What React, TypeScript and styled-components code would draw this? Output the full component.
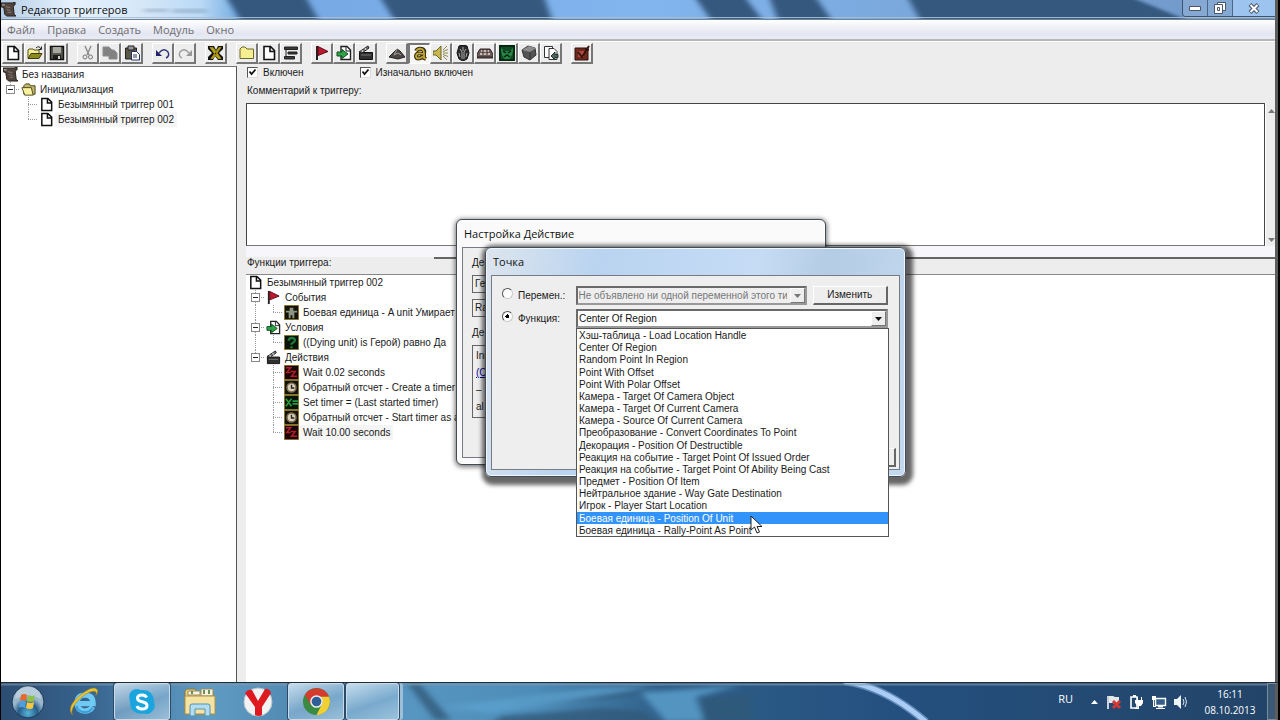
import React from 'react';
import styled, { createGlobalStyle, css } from 'styled-components';

const GlobalStyle = createGlobalStyle`
  * { box-sizing: border-box; }
  html, body { margin: 0; padding: 0; }
  body {
    background: #fff;
    color: #1a1a1a;
    font: 10px/12px "Liberation Sans", Arial, sans-serif;
    overflow: hidden;
  }
  button, select, input, textarea { font: inherit; color: inherit; }
`;

const UI_FONT = '"Open Sans", "Noto Sans", sans-serif';

/* ---------- Shell ---------- */

const Screen = styled.div`
  position: relative;
  display: flex;
  flex-direction: column;
  height: 100vh;
  border-left: 1px solid #000;
  border-right: 2px solid #000;
`;

const Desktop = styled.div`
  flex: 1;
  min-height: 0;
  display: flex;
  flex-direction: column;
  border-right: 3px solid #5c5c5c;
  background: #ededed;
`;

const TitleBar = styled.header`
  position: relative;
  display: flex;
  align-items: center;
  height: 20px;
  background: #7fb0e8;
  border-bottom: 1px solid #6f8296;
  overflow: hidden;
`;

const Wallpaper = styled.svg`
  position: absolute;
  inset: 0;
  width: 100%;
  height: 100%;
`;

const AppTitle = styled.h1`
  position: relative;
  display: flex;
  align-items: center;
  gap: 5px;
  margin: 0;
  flex: 1;
  font: 11px/20px ${UI_FONT};
  color: #111;
`;

const WindowButtons = styled.div`
  position: relative;
  align-self: flex-start;
  display: flex;
  border: 1px solid #3d536e;
  border-top: 0;
  border-right: 0;
  border-radius: 0 0 0 4px;
  overflow: hidden;
`;

const WindowButton = styled.button<{ $wide?: boolean }>`
  display: flex;
  align-items: center;
  justify-content: center;
  width: ${p => (p.$wide ? 42 : 25)}px;
  height: 16px;
  padding: 0;
  border: 0;
  border-right: ${p => (p.$wide ? '0' : '1px solid #4a6688')};
  background: ${p => (p.$wide ? '#9cc4ef' : '#86a9d3')};
`;

const MenuBar = styled.nav`
  display: flex;
  gap: 12px;
  height: 21px;
  padding-left: 6px;
  background: linear-gradient(#fff, #e4e6f2 70%, #e8eaf4);
  border-bottom: 2px solid #b4b8bb;
`;

const MenuItem = styled.button`
  padding: 0;
  border: 0;
  background: none;
  font: 11px/18px ${UI_FONT};
  color: #6d6d6d;
`;

const Toolbar = styled.div`
  display: flex;
  gap: 9px;
  height: 25px;
  padding: 1px 0 0 1px;
  border-top: 1px solid #fff;
`;

const ToolGroup = styled.div`
  display: flex;
`;

const ToolButton = styled.button<{ $pressed?: boolean }>`
  display: flex;
  align-items: center;
  justify-content: center;
  width: 22px;
  height: 21px;
  padding: 0;
  border: 1px solid;
  border-color: #fff #777 #777 #fff;
  border-right-width: 2px;
  border-bottom-width: 2px;
  background: #ededed;
  ${p => p.$pressed && css`
    border-color: #777 #fff #fff #777;
    border-width: 2px 1px 1px 2px;
    background: #f6f6f6;
  `}
`;

/* ---------- Work area ---------- */

const Workspace = styled.main`
  flex: 1;
  min-height: 0;
  display: flex;
`;

const TreePane = styled.aside`
  width: 236px;
  background: #fff;
  border-top: 1px solid #777;
  border-right: 1px solid #555;
`;

const Editor = styled.section`
  flex: 1;
  min-width: 0;
  display: flex;
  flex-direction: column;
  padding-left: 9px;
`;

const CheckRow = styled.div`
  display: flex;
  gap: 56px;
  padding: 1px 0 0 1px;
  height: 18px;
`;

const CheckLabel = styled.label`
  display: flex;
  align-items: flex-start;
  gap: 5px;
`;

const Check = styled.span`
  position: relative;
  width: 11px;
  height: 11px;
  border: 1px solid;
  border-color: #555 #ddd #ddd #555;
  background: #fff;

  input { position: absolute; inset: 0; margin: 0; opacity: 0; }
  svg { display: block; }
`;

const FieldLabel = styled.label`
  height: 19px;
  padding: 1px 0 0 1px;
`;

const CommentRow = styled.div`
  display: flex;
  height: 143px;
`;

const Comment = styled.textarea`
  flex: 1;
  border: 1px solid;
  border-color: #444 #444 #777 #444;
  background: #fff;
  resize: none;
  outline: 0;
`;

const ScrollTrack = styled.div`
  display: flex;
  flex-direction: column;
  justify-content: space-between;
  align-items: flex-end;
  width: 10px;
  padding: 6px 0 4px;
  border-left: 1px solid #fff;
`;

const Splitter = styled.div`
  height: 11px;
  background: #f7f7fb;
`;

const FunctionsTitle = styled.h2`
  display: flex;
  height: 18px;
  margin: 0;
  font: inherit;
  border-bottom: 1px solid #888;

  &::after {
    content: '';
    flex: 1;
    border-top: 2px solid #666;
  }
  span { width: 188px; padding-left: 1px; }
`;

const FunctionsPane = styled.div`
  flex: 1;
  background: #fff;
`;

/* ---------- Tree ---------- */

const Tree = styled.ul`
  list-style: none;
  margin: 0;
  padding: 0;
`;

const TreeRow = styled.li`
  display: flex;
  height: 15px;
  line-height: 15px;
  white-space: nowrap;
`;

const vDots = 'repeating-linear-gradient(#999 0 1px, transparent 1px 2px)';
const hDots = 'repeating-linear-gradient(90deg, #999 0 1px, transparent 1px 2px)';

type GuideKind = 'blank' | 'line' | 'tee' | 'elbow';

const Guide = styled.span<{ $kind: GuideKind }>`
  display: flex;
  align-items: center;
  justify-content: center;
  width: 18px;
  height: 15px;
  background-repeat: no-repeat;
  ${p => p.$kind === 'line' && css`
    background-image: ${vDots};
    background-size: 1px 15px;
    background-position: 9px 0;
  `}
  ${p => p.$kind === 'tee' && css`
    background-image: ${vDots}, ${hDots};
    background-size: 1px 15px, 9px 1px;
    background-position: 9px 0, 9px 7px;
  `}
  ${p => p.$kind === 'elbow' && css`
    background-image: ${vDots}, ${hDots};
    background-size: 1px 8px, 9px 1px;
    background-position: 9px 0, 9px 7px;
  `}
`;

const Toggle = styled.button`
  display: flex;
  align-items: center;
  justify-content: center;
  width: 9px;
  height: 9px;
  padding: 0;
  border: 1px solid #888;
  background: #fff;

  &::before { content: ''; width: 5px; height: 1px; background: #222; }
`;

const IconCell = styled.span`
  display: flex;
  align-items: center;
  justify-content: center;
  width: 18px;
`;

const NodeText = styled.span<{ $selected?: boolean }>`
  padding: 0 3px;
  background: ${p => (p.$selected ? '#f5f5f5' : 'transparent')};
`;

/* ---------- Dialogs ---------- */

const Dialog = styled.section<{ $front?: boolean }>`
  position: absolute;
  display: flex;
  flex-direction: column;
  border: 1px solid #444b55;
  border-radius: 6px;
  ${p => p.$front ? css`
    left: 484px;
    top: 247px;
    width: 421px;
    height: 230px;
    padding: 0 5px 6px;
    background: linear-gradient(100deg, #dde5ee 0, #b9d3f0 25%, #c6dcf5 60%, #b4cce4 75%, #c3daf0 100%);
    box-shadow: inset 0 0 0 1px #eef6ff, 2px 3px 4px 5px rgba(0, 0, 0, .6);
  ` : css`
    left: 455px;
    top: 219px;
    width: 370px;
    height: 246px;
    padding: 0 5px 6px;
    background: #fafafa;
    box-shadow: inset 0 0 0 1px #fff, 0 1px 5px 1px rgba(0, 0, 0, .55);
  `}
`;

const DialogTitle = styled.h2`
  height: 27px;
  margin: 0;
  padding-left: 2px;
  font: 11px/27px ${UI_FONT};
  color: #111;
`;

const DialogBody = styled.form`
  flex: 1;
  display: flex;
  flex-direction: column;
  border: 1px solid #777c84;
  background: #eeeeee;
`;

const BackBody = styled(DialogBody)`
  padding: 5px 9px 39px;
  gap: 6px;
`;

const BackLabel = styled.div`
  height: 16px;
  padding-top: 4px;
`;

const BackField = styled.div`
  height: 18px;
  padding: 2px;
  border: 1px solid #666;
  border-right-color: #fff;
`;

const BackPanel = styled(BackField)`
  flex: 1;
  display: flex;
  flex-direction: column;
  justify-content: space-between;
  padding: 4px 3px;

  a { color: #00009a; }
`;

const FrontBody = styled(DialogBody)`
  padding: 10px 3px 2px 10px;
  gap: 4px;
`;

const OptionRow = styled.div`
  display: flex;
  align-items: center;
  height: 19px;
  padding-right: 8px;
`;

const RadioLabel = styled.label`
  display: flex;
  align-items: center;
  gap: 5px;
  width: 74px;
`;

const Radio = styled.input`
  appearance: none;
  width: 11px;
  height: 11px;
  margin: 0 0 4px;
  border: 1px solid;
  border-color: #555 #ccc #ccc #555;
  border-radius: 50%;
  background: #fff;

  &:checked { background: radial-gradient(circle, #000 0 2px, #fff 2px); }
`;

const Combo = styled.div<{ $grow?: boolean }>`
  position: relative;
  display: flex;
  width: ${p => (p.$grow ? 'auto' : '231px')};
  flex: ${p => (p.$grow ? '1' : 'none')};
  height: 19px;
`;

const Select = styled.select`
  appearance: none;
  flex: 1;
  min-width: 0;
  height: 19px;
  padding: 0 18px 0 1px;
  border: 2px solid;
  border-color: #6a6a6a #999 #999 #6a6a6a;
  border-radius: 0;
  background: #fff;
  color: #111;
  opacity: 1;

  &:disabled { background: #eee; color: #777; }
`;

const ComboArrow = styled.span`
  position: absolute;
  right: 2px;
  top: 2px;
  display: flex;
  align-items: center;
  justify-content: center;
  width: 15px;
  height: 15px;
  border: 1px solid;
  border-color: #fff #777 #777 #fff;
  background: #eee;
  pointer-events: none;
`;

const DialogButton = styled.button`
  width: 76px;
  height: 19px;
  margin-left: 6px;
  padding: 0;
  border: 1px solid;
  border-color: #fff #666 #666 #fff;
  border-right-width: 2px;
  border-bottom-width: 2px;
  background: #eee;
`;

const Actions = styled.div`
  display: flex;
  justify-content: flex-end;
  margin-top: auto;
`;

const OptionList = styled.ul`
  position: absolute;
  z-index: 2;
  left: 0;
  right: -1px;
  top: 19px;
  display: grid;
  grid-auto-rows: minmax(0, 1fr);
  height: 209px;
  margin: 0;
  padding: 0;
  list-style: none;
  border: 1px solid #555;
  background: #fff;
`;

const Option = styled.li<{ $active?: boolean }>`
  position: relative;
  padding: 1px 0 0 2px;
  white-space: nowrap;
  background: ${p => (p.$active ? '#3294fa' : 'transparent')};
  color: ${p => (p.$active ? '#fff' : '#1a1a1a')};
`;

const Cursor = styled.svg`
  position: absolute;
  z-index: 3;
  left: 173px;
  top: 3px;
`;

/* ---------- Taskbar ---------- */

const Taskbar = styled.footer`
  position: relative;
  display: flex;
  height: 38px;
  border-top: 1px solid #222c38;
  background: #24507f;
  overflow: hidden;
`;

const TaskList = styled.div`
  position: relative;
  flex: 1;
  display: flex;
  gap: 2px;
`;

const Task = styled.button<{ $open?: boolean; $narrow?: boolean; $stacked?: boolean }>`
  display: flex;
  align-items: center;
  justify-content: center;
  width: ${p => (p.$narrow ? 53 : 56)}px;
  padding: 0;
  border: 1px solid ${p => (p.$open ? '#c8dbea' : 'transparent')};
  border-radius: 3px;
  background: ${p => p.$open ? 'linear-gradient(160deg, rgba(225,240,250,.8), rgba(150,190,220,.55) 55%, rgba(200,225,240,.6))' : 'none'};
  box-shadow: ${p => (p.$open ? '0 0 0 1px #2c4a66' : 'none')}${p => (p.$stacked ? ', 4px 0 0 0 #9dc0d8' : '')};
`;

const Tray = styled.div`
  position: relative;
  display: flex;
  align-items: center;
  gap: 7px;
  color: #fff;
  font: 10px/16px ${UI_FONT};
`;

const Language = styled.span`
  padding: 0 11px 5px 0;
  font-size: 11px;
`;

const Clock = styled.time`
  display: flex;
  flex-direction: column;
  align-items: center;
  width: 64px;
  padding-left: 4px;
`;

const ShowDesktop = styled.button`
  align-self: stretch;
  width: 11px;
  padding: 0;
  border: 1px solid #7a8c9c;
  border-right: 3px solid #5c5c5c;
  background: #3b5877;
`;

/* ---------- Icons ---------- */

type IconName =
  | 'scroll' | 'page' | 'open' | 'save' | 'cut' | 'copy' | 'paste' | 'undo' | 'redo' | 'x'
  | 'folder' | 'folderOpen' | 'lines' | 'flag' | 'condition' | 'action' | 'terrain' | 'letter'
  | 'sound' | 'helmet' | 'campaign' | 'orc' | 'rock' | 'import' | 'test' | 'unit' | 'question'
  | 'sleep' | 'timer' | 'variable';

const shapes: Record<IconName, React.ReactNode> = {
  scroll: <><path d="M0 1h12l3-1v3l-2 1 1 9 2 2H6l-2-2L3 6 0 5z" fill="#51453f" stroke="#221d1a" /><path d="M5 5l5 1M6 8l4 1M7 11l4 0" stroke="#8b7a70" /><path d="M1 2h3v2H1z" fill="#978880" /></>,
  page: <path d="M3 1.500h6.500l4 4V14.500H3zM9 2v4.500h4" fill="#fff" stroke="#111" strokeWidth="1.600" />,
  open: <><path d="M1 13V5l1-1h4l1 1h5v3" fill="#f3ec9a" stroke="#55530e" /><path d="M1 13.500L4 8.500h11l-3 5z" fill="#8d8a22" stroke="#3e3c08" /><path d="M9 3q3-3 5 1M14.500 1.500v3h-3" fill="none" stroke="#222" /></>,
  save: <><path d="M1.500 1.500h13v13h-13z" fill="#55564a" stroke="#111" strokeWidth="1.400" /><path d="M4 2h8v6H4z" fill="#a9a9a2" /><path d="M4 10h8v4H4z" fill="#1b1b1b" /><path d="M9 11h2v3H9z" fill="#ccc" /></>,
  cut: <><path d="M5 1l4 9M11 1L7 10" stroke="#8a8a8a" strokeWidth="1.400" /><circle cx="5" cy="12" r="2" fill="none" stroke="#777" /><circle cx="10.500" cy="12" r="2" fill="none" stroke="#777" /></>,
  copy: <path d="M1 2h6l3 3h2l3 3v6H7v-3H1z" fill="#828282" stroke="#8d8d8d" />,
  paste: <><path d="M1.500 3h11v11h-11z" fill="#5b5b43" stroke="#222" /><path d="M4 1h6v4H4z" fill="#999" stroke="#222" /><path d="M7.500 6.500h5l3 3v5.500h-8z" fill="#fff" stroke="#24306b" /><path d="M9 10h4M9 12h4" stroke="#24306b" /></>,
  undo: <><path d="M4 8q5-6 9-1 2 4-2 6" fill="none" stroke="#33337a" strokeWidth="1.400" /><path d="M1 5v6h6z" fill="#22226b" /></>,
  redo: <><path d="M12 8Q7 2 3 7q-2 4 2 6" fill="none" stroke="#999" strokeWidth="1.300" /><path d="M15 5v6H9z" fill="#999" /></>,
  x: <><path d="M0 1h6l2 4 2-4h5v3l-4 4 4 4v3h-5l-3-4-2 4H0v-3l4-4-4-4z" fill="#111" /><path d="M2 2.500h3l8 11h-3zM13 2.500h-2l-8 11h2z" fill="#b7a218" stroke="#a08c10" /></>,
  folder: <path d="M1 13.500V4l2-2h3l2 2h6.500v9.500z" fill="#f5ef91" stroke="#6d6826" />,
  folderOpen: <><path d="M3 13V4l2-2h4l1 2h5v9z" fill="#c2b86a" stroke="#444018" /><path d="M1 6h10l2 8H4z" fill="#f8f2a0" stroke="#4e4a1c" /></>,
  lines: <path d="M1.500 2h13v2.500h-13zM5 7h9v2H5zM1.500 11.500h10v2.500h-10zM3 5v7" fill="#3b3b36" stroke="#222" />,
  flag: <><path d="M3 1v14" stroke="#222" strokeWidth="2" /><path d="M4 1.500l10 5-10 4z" fill="#bf1830" stroke="#5a0a18" /></>,
  condition: <><path d="M5 1.500h6l3.500 3.500v9.500H5z" fill="#fff" stroke="#222" strokeWidth="1.400" /><path d="M10 2v4h4" fill="none" stroke="#222" /><path d="M1 7h5V4.500L12 9l-6 4.500V11H1z" fill="#30a348" stroke="#0e4f1d" /></>,
  action: <><path d="M1.500 7.500h13v7h-13z" fill="#2f2f2f" stroke="#111" /><path d="M1 7l9-6 1 2-7 5z" fill="#777" stroke="#222" /><path d="M4 5l1 2M7 3l1 2" stroke="#eee" /><path d="M3 10h10" stroke="#777" /></>,
  terrain: <><path d="M0 12l4-4 4-4 3 2 5 6-7 2z" fill="#4b4643" stroke="#272321" /><path d="M8 4l-3 6 4-2 3 2" fill="none" stroke="#aaa29c" /></>,
  letter: <><path d="M4 5q2-3 6-2 3 1 2 4v5l2 1M11 8Q4 6 4 10.500q1 4 7 0" fill="none" stroke="#3c310b" strokeWidth="4" /><path d="M4 5q2-3 6-2 2 1 2 4v5l2 1M11 8Q4 6 4 10.500q1 4 7 0" fill="none" stroke="#c5a93a" strokeWidth="1.800" /></>,
  sound: <><path d="M0 6h3l5-5v14l-5-5H0z" fill="#c7b950" stroke="#6b6225" /><path d="M10 5l4-4M10 8h5M10 11l4 4M10 6.500l5-2M10 9.500l5 2" stroke="#8f8850" /></>,
  helmet: <><path d="M4 1q4-2 8 0l2 7-2 6-4 2-4-2-2-6z" fill="#2d2d2d" stroke="#111" /><path d="M5 4l2 3v7M11 4L9 7v7M8 2v4M4 8l1 4M12 8l-1 4" stroke="#a9a9a9" fill="none" /></>,
  campaign: <><path d="M3 4h10l3 5v4H0V9z" fill="#6b5b57" stroke="#2d2523" /><path d="M4 6h8M3 9h10" stroke="#e9d8d3" strokeWidth="1.600" /><path d="M6 4v6M10 4v6M0 12h16" stroke="#352827" /></>,
  orc: <><path d="M0 0h16v16H0z" fill="#0f4a22" /><path d="M1 2l4 4h6l4-4-2 8-3 5H6l-3-5z" fill="#248445" /><path d="M4 6l3 2M12 6L9 8M5 12l3-2 3 2M1 1v14h14V1z" stroke="#041c0b" strokeWidth="1.400" fill="none" /></>,
  rock: <><path d="M1 5l6-4 7 2 1 7-6 5-6-3z" fill="#545454" stroke="#333" /><path d="M1 5l8 2 6-4-7-2z" fill="#8d8d8d" /><path d="M9 7v8" stroke="#333" /></>,
  import: <><path d="M1.500 1.500h8v11h-8z" fill="#fff" stroke="#333" /><path d="M6 3.500h5l3 3v8H6z" fill="#fff" stroke="#333" /><path d="M8 11l4-4v2.500h3v3h-3V15z" fill="#51695c" stroke="#233" /></>,
  test: <><path d="M1 3h13v12H1z" fill="#6e2a21" stroke="#2e100c" /><path d="M4 6h6v6H4z" fill="#b04a38" /><path d="M4 7l4 5 7-11M11 4l4 1" stroke="#35110c" strokeWidth="1.800" fill="none" /></>,
  unit: <><path d="M.5.500h15v15H.5z" fill="#121208" stroke="#8a7426" /><path d="M6 3h4v3h4v2h-3v6H9v-3H7v3H5V8H2V6h4z" fill="#8d9582" /></>,
  question: <><path d="M.5.500h15v15H.5z" fill="#06140a" stroke="#8a7426" /><path d="M5 6q0-3 4-3 4 1 2 4L8 9.500v1M8 12v2" fill="none" stroke="#237a36" strokeWidth="2.400" /></>,
  sleep: <><path d="M.5.500h15v15H.5z" fill="#1a0606" stroke="#8a6a26" /><path d="M2 3h5L3 8h4M7 7h5l-4 5h6" fill="none" stroke="#b01d28" strokeWidth="1.600" /></>,
  timer: <><path d="M.5.500h15v15H.5z" fill="#15120a" stroke="#8a7426" /><circle cx="8" cy="8" r="4.800" fill="#d9cfb6" stroke="#7b6d50" strokeWidth="1.600" /><path d="M8 5v3.500h3" fill="none" stroke="#222" strokeWidth="1.400" /></>,
  variable: <><path d="M.5.500h15v15H.5z" fill="#06140a" stroke="#8a7426" /><path d="M2 4l6 8M8 4l-6 8M9 6.500h6M9 9.500h6" stroke="#279a3d" strokeWidth="1.800" /></>,
};

const Icon = ({ name, size = 14 }: { name: IconName; size?: number }) => (
  <svg width={size} height={size} viewBox="0 0 16 16" fill="none" aria-hidden="true">{shapes[name]}</svg>
);

const Triangle = ({ up, color = '#111' }: { up?: boolean; color?: string }) => (
  <svg width="7" height="4" viewBox="0 0 7 4" aria-hidden="true">
    <path d={up ? 'M0 4h7L3.500 0z' : 'M0 0h7L3.500 4z'} fill={color} />
  </svg>
);

/* ---------- Data ---------- */

const menus = ['Файл', 'Правка', 'Создать', 'Модуль', 'Окно'];

const tools: [IconName, string][][] = [
  [['page', 'Новый'], ['open', 'Открыть'], ['save', 'Сохранить']],
  [['cut', 'Вырезать'], ['copy', 'Копировать'], ['paste', 'Вставить']],
  [['undo', 'Отменить'], ['redo', 'Повторить']],
  [['x', 'Переменные']],
  [['folder', 'Категория'], ['page', 'Триггер'], ['lines', 'Комментарий']],
  [['flag', 'Событие'], ['condition', 'Условие'], ['action', 'Действие']],
  [['terrain', 'Рельеф'], ['letter', 'Триггеры'], ['sound', 'Звуки'], ['helmet', 'Объекты'],
    ['campaign', 'Кампания'], ['orc', 'ИИ'], ['rock', 'Менеджер'], ['import', 'Импорт']],
  [['test', 'Проверка']],
];

interface Node { guides: GuideKind[]; icon: IconName; text: string; toggle?: boolean; selected?: boolean }

const mapTree: Node[] = [
  { guides: [], icon: 'scroll', text: 'Без названия' },
  { guides: ['elbow'], toggle: true, icon: 'folderOpen', text: 'Инициализация' },
  { guides: ['blank', 'tee'], icon: 'page', text: 'Безымянный триггер 001' },
  { guides: ['blank', 'elbow'], icon: 'page', text: 'Безымянный триггер 002', selected: true },
];

const functionTree: Node[] = [
  { guides: [], icon: 'page', text: 'Безымянный триггер 002' },
  { guides: ['tee'], toggle: true, icon: 'flag', text: 'События' },
  { guides: ['line', 'elbow'], icon: 'unit', text: 'Боевая единица - A unit Умирает' },
  { guides: ['tee'], toggle: true, icon: 'condition', text: 'Условия' },
  { guides: ['line', 'elbow'], icon: 'question', text: '((Dying unit) is Герой) равно Да' },
  { guides: ['elbow'], toggle: true, icon: 'action', text: 'Действия' },
  { guides: ['blank', 'tee'], icon: 'sleep', text: 'Wait 0.02 seconds' },
  { guides: ['blank', 'tee'], icon: 'timer', text: 'Обратный отсчет - Create a timer' },
  { guides: ['blank', 'tee'], icon: 'variable', text: 'Set timer = (Last started timer)' },
  { guides: ['blank', 'tee'], icon: 'timer', text: 'Обратный отсчет - Start timer as a' },
  { guides: ['blank', 'elbow'], icon: 'sleep', text: 'Wait 10.00 seconds', selected: true },
];

const options = [
  'Хэш-таблица - Load Location Handle',
  'Center Of Region',
  'Random Point In Region',
  'Point With Offset',
  'Point With Polar Offset',
  'Камера - Target Of Camera Object',
  'Камера - Target Of Current Camera',
  'Камера - Source Of Current Camera',
  'Преобразование - Convert Coordinates To Point',
  'Декорация - Position Of Destructible',
  'Реакция на событие - Target Point Of Issued Order',
  'Реакция на событие - Target Point Of Ability Being Cast',
  'Предмет - Position Of Item',
  'Нейтральное здание - Way Gate Destination',
  'Игрок - Player Start Location',
  'Боевая единица - Position Of Unit',
  'Боевая единица - Rally-Point As Point',
];
const activeOption = 15;

/* ---------- Parts ---------- */

const TreeView = ({ nodes }: { nodes: Node[] }) => (
  <Tree>
    {nodes.map((n, i) => (
      <TreeRow key={i}>
        {n.guides.map((g, j) => (
          <Guide key={j} $kind={g}>
            {n.toggle && j === n.guides.length - 1 && <Toggle type="button" aria-label="Свернуть" />}
          </Guide>
        ))}
        <IconCell><Icon name={n.icon} size={15} /></IconCell>
        <NodeText $selected={n.selected}>{n.text}</NodeText>
      </TreeRow>
    ))}
  </Tree>
);

const Checkbox = ({ label }: { label: string }) => (
  <CheckLabel>
    <Check>
      <input type="checkbox" defaultChecked />
      <svg width="9" height="9" viewBox="0 0 9 9" aria-hidden="true">
        <path d="M1.500 3.500l2 2.500 4-4.500" fill="none" stroke="#111" strokeWidth="1.800" />
      </svg>
    </Check>
    {label}
  </CheckLabel>
);

const TitleWallpaper = () => (
  <Wallpaper viewBox="0 0 1275 20" preserveAspectRatio="none" aria-hidden="true">
    <defs>
      <linearGradient id="glass"><stop offset="0" stopColor="#b5cfe8" /><stop offset=".3" stopColor="#e6f1fb" /><stop offset=".6" stopColor="#d5e7f8" /><stop offset=".85" stopColor="#b9d9f5" /><stop offset="1" stopColor="#78aee4" /></linearGradient>
      <linearGradient id="sky"><stop offset="0" stopColor="#6d9fdc" /><stop offset=".5" stopColor="#82b5ee" /><stop offset="1" stopColor="#7097c6" /></linearGradient>
      <filter id="soften"><feGaussianBlur stdDeviation="3 1" /></filter>
    </defs>
    <path d="M0 0h1275v20H0z" fill="url(#sky)" />
    <path d="M0 0h236v20H0z" fill="url(#glass)" />
    <path d="M143 9h24v4h-24zM172 9h34v5h-34z" fill="#7c93ab" opacity=".4" filter="url(#soften)" />
    <g fill="#35597f" filter="url(#soften)">
      <path d="M224-5h80l16 30h-78zM378-5h165l10 30H396zM693-5h50l22 30h-52zM768-5h46l20 30h-55zM906-5h220l70 30H922z" />
    </g>
    <path d="M0 18.500h1275" stroke="#a9bfd6" />
  </Wallpaper>
);

const TaskbarWallpaper = () => (
  <Wallpaper viewBox="0 0 1277 38" preserveAspectRatio="none" aria-hidden="true">
    <defs>
      <linearGradient id="bar">
        <stop offset="0" stopColor="#2d4d72" /><stop offset=".07" stopColor="#37648f" />
        <stop offset=".16" stopColor="#5f9cc4" /><stop offset=".24" stopColor="#4f87b0" />
        <stop offset=".32" stopColor="#5796c1" /><stop offset=".42" stopColor="#4d8cb8" />
        <stop offset=".52" stopColor="#2f5f88" /><stop offset=".7" stopColor="#24507f" /><stop offset="1" stopColor="#234468" />
      </linearGradient>
      <filter id="haze"><feGaussianBlur stdDeviation="3" /></filter>
    </defs>
    <path d="M0 0h1277v38H0z" fill="url(#bar)" />
    <g filter="url(#haze)">
      <path d="M406 0h12l32 38h-16zM500 22l100-14 55 0-50 8-80 6zM500 34l100-8 40 2 18 14H490zM700 16l50-6v28h-50z" fill="#2f5878" opacity=".8" />
      <path d="M440 25l150-19 60-3-40 8-120 20zM640 10l100-8-45 12 8 26h-38z" fill="#5da1d0" opacity=".8" />
    </g>
    <path d="M843-2q42 6 82 42" fill="none" stroke="#86aee0" strokeWidth="8" opacity=".6" />
    <path d="M843-2q42 6 82 42" fill="none" stroke="#a9cdf5" strokeWidth="5" />
    <path d="M0 1.500h1277" stroke="#8499aa" strokeWidth="2" opacity=".6" />
  </Wallpaper>
);

const StartOrb = () => (
  <svg width="34" height="34" viewBox="0 0 34 34" aria-hidden="true">
    <defs><radialGradient id="orb" cy=".85"><stop offset="0" stopColor="#57b5dc" /><stop offset=".6" stopColor="#285c88" /><stop offset="1" stopColor="#9ab8cc" /></radialGradient></defs>
    <circle cx="17" cy="17" r="16" fill="url(#orb)" stroke="#1c3854" />
    <path d="M4 14a13 13 0 0 1 26 0q-13-7-26 0z" fill="#dbe7ef" opacity=".45" />
    <path d="M10 10q3-2 6 0l-1 6q-3-2-6 0z" fill="#e8672a" /><path d="M17 10q4 2 7-0l-1 6q-3 2-7 0z" fill="#8fc04a" />
    <path d="M9 17q3-2 6 0l-1 6q-3-2-6 0z" fill="#4d9fe0" /><path d="M16 17q4 2 7 0l-1 6q-3 2-7 0z" fill="#fac83c" />
  </svg>
);

const ExplorerIcon = () => (
  <svg width="32" height="30" viewBox="0 0 32 30" aria-hidden="true">
    <path d="M1 27V4l2-2h8l2 3h16v22z" fill="#e6cf83" stroke="#8f7836" />
    <path d="M4 4h12v4H4zM17 2h12v7H17z" fill="#f7f3df" stroke="#9a8c5e" />
    <path d="M8 4v3M20 3v4M25 3v4" stroke="#65905b" strokeWidth="2" />
    <path d="M1 9h30v18H1z" fill="#f5e3a3" stroke="#ac9347" />
    <path d="M6 29V19q0-2 2-2h16q2 0 2 2v10h-5v-7H11v7z" fill="#b3dcf0" stroke="#5392b4" />
  </svg>
);

const BrowserIcon = () => (
  <svg width="32" height="32" viewBox="0 0 30 30" aria-hidden="true">
    <path d="M23 19.500q-2 4-7.500 4-7-.5-7-7.500 0-7.500 7.500-7.500t7.500 8H9" fill="none" stroke="#6fcaf3" strokeWidth="5" />
    <path d="M23 20.500q-2 4-7.500 4-7-.5-7.500-6" fill="none" stroke="#3b9fd8" strokeWidth="2" />
    <path d="M4 27Q-2 20 11 9 23-1 27 3q2 2-1 6 2-5-3-4-6 1-14 9-7 8-5 13z" fill="#e8c53c" stroke="#a98418" strokeWidth=".6" />
  </svg>
);

const SkypeIcon = () => (
  <svg width="28" height="28" viewBox="0 0 28 28" aria-hidden="true">
    <path d="M8 1q3 0 4.500 1Q26 1 26 14.500q2 4-1 8-4 5-9 3Q2 27 2 13-1 3 8 1z" fill="#1ba5de" />
    <path d="M18.500 9.500q-1-2.500-4.500-2.500-4.500 0-4.500 3.200 0 2.800 4.500 3.500 5 .8 5 4 0 3.300-5 3.300-4 0-5-3" fill="none" stroke="#fff" strokeWidth="3" />
  </svg>
);

const YandexIcon = () => (
  <svg width="30" height="32" viewBox="0 0 30 32" aria-hidden="true">
    <circle cx="15" cy="16" r="14" fill="#f2f2f2" stroke="#bcc5cc" />
    <path d="M2 7q3-4 7-3l6 11 7-12q4-1 6 4l-9 14v8q-3 2-7 0v-8z" fill="#de1a20" />
  </svg>
);

const ChromeIcon = () => (
  <svg width="29" height="29" viewBox="0 0 30 30" aria-hidden="true">
    <circle cx="15" cy="15" r="14" fill="#3a8b42" />
    <path d="M3 8A14 14 0 0 1 28 10H15l-6 8z" fill="#d63b30" />
    <path d="M28 10a14 14 0 0 1-13 19l6-12q1-4-3-7z" fill="#f3cf33" />
    <circle cx="15" cy="15" r="6.500" fill="#f1f1ee" /><circle cx="15" cy="15" r="5" fill="#2f5f96" />
  </svg>
);

const TrayIcons = () => (
  <>
    <Triangle up color="#fff" />
    <svg width="17" height="16" viewBox="0 0 17 16" aria-hidden="true"><path d="M3 2v13" stroke="#fff" strokeWidth="1.500" /><path d="M4 2h4l2 1h4v7H9L8 9H4z" fill="#e4e8ec" /><path d="M8 7l7 7M15 7l-7 7" stroke="#d23a35" strokeWidth="3" /></svg>
    <svg width="15" height="16" viewBox="0 0 15 16" aria-hidden="true"><path d="M2 3h6v11H2z" fill="none" stroke="#fff" strokeWidth="1.600" /><path d="M4 1h3v2H4zM6 6h8v3l-2 3H9L6 9zM8 3h1v3H8zM12 3h1v3h-1zM9 11h1v4H6v-1h3z" fill="#fff" /></svg>
    <svg width="16" height="16" viewBox="0 0 16 16" aria-hidden="true"><path d="M4.500 4.500h10v7h-10z" fill="#375e88" stroke="#fff" strokeWidth="1.400" /><path d="M1 2h4v4H1zM7 12h5v1.500H7zM5 14h9v1H5zM2 6h1v6h2v1H2z" fill="#fff" /></svg>
    <svg width="15" height="14" viewBox="0 0 15 14" aria-hidden="true"><path d="M0 4h3l4-4v14l-4-4H0z" fill="#f1f4f7" /><path d="M9 4q2 3 0 6M11 2q3 5 0 10" fill="none" stroke="#dbe5ee" /></svg>
  </>
);

export default function App() {
  return (
    <>
      <GlobalStyle />
      <Screen>
        <Desktop>
          <TitleBar>
            <TitleWallpaper />
            <AppTitle><Icon name="scroll" size={15} />Редактор триггеров</AppTitle>
            <WindowButtons>
              <WindowButton type="button" aria-label="Свернуть">
                <svg width="12" height="5"><path d="M.5.500h11v4H.5z" fill="#fff" stroke="#4a5766" /></svg>
              </WindowButton>
              <WindowButton type="button" aria-label="Восстановить">
                <svg width="12" height="12"><path d="M3.500.500h8v8h-8z" fill="#fff" stroke="#4a5766" /><path d="M.5 2.500h8v9h-8zM3.500 5.500h2v3h-2z" fill="#fff" stroke="#4a5766" /></svg>
              </WindowButton>
              <WindowButton type="button" $wide aria-label="Закрыть">
                <svg width="12" height="11"><path d="M2 1.500l8 8M10 1.500l-8 8" stroke="#4a5766" strokeWidth="4" /><path d="M2.500 2l7 7M9.500 2l-7 7" stroke="#fff" strokeWidth="2" /></svg>
              </WindowButton>
            </WindowButtons>
          </TitleBar>
          <MenuBar>{menus.map(m => <MenuItem key={m} type="button">{m}</MenuItem>)}</MenuBar>
          <Toolbar>
            {tools.map((group, i) => (
              <ToolGroup key={i}>
                {group.map(([icon, label]) => (
                  <ToolButton key={label} type="button" aria-label={label} $pressed={icon === 'letter'}>
                    <Icon name={icon} size={16} />
                  </ToolButton>
                ))}
              </ToolGroup>
            ))}
          </Toolbar>
          <Workspace>
            <TreePane><TreeView nodes={mapTree} /></TreePane>
            <Editor>
              <CheckRow>
                <Checkbox label="Включен" />
                <Checkbox label="Изначально включен" />
              </CheckRow>
              <FieldLabel htmlFor="comment">Комментарий к триггеру:</FieldLabel>
              <CommentRow>
                <Comment id="comment" />
                <ScrollTrack>
                  <Triangle up color="#777" />
                  <Triangle color="#777" />
                </ScrollTrack>
              </CommentRow>
              <Splitter />
              <FunctionsTitle><span>Функции триггера:</span></FunctionsTitle>
              <FunctionsPane><TreeView nodes={functionTree} /></FunctionsPane>
            </Editor>
          </Workspace>
        </Desktop>

        <Dialog aria-label="Настройка Действие">
          <DialogTitle>Настройка Действие</DialogTitle>
          <BackBody>
            <BackLabel>Де</BackLabel>
            <BackField>Ге</BackField>
            <BackField>Ra</BackField>
            <BackLabel>Де</BackLabel>
            <BackPanel>
              <span>Ini</span>
              <a href="#point">(C</a>
              <span>–</span>
              <span>al</span>
            </BackPanel>
          </BackBody>
        </Dialog>

        <Dialog $front aria-label="Точка">
          <DialogTitle>Точка</DialogTitle>
          <FrontBody>
            <OptionRow>
              <RadioLabel><Radio type="radio" name="source" />Перемен.:</RadioLabel>
              <Combo>
                <Select disabled aria-label="Перемен.">
                  <option>Не объявлено ни одной переменной этого типа</option>
                </Select>
                <ComboArrow><Triangle color="#777" /></ComboArrow>
              </Combo>
              <DialogButton type="button">Изменить</DialogButton>
            </OptionRow>
            <OptionRow>
              <RadioLabel><Radio type="radio" name="source" defaultChecked />Функция:</RadioLabel>
              <Combo $grow>
                <Select aria-label="Функция" defaultValue="Center Of Region">
                  <option>Center Of Region</option>
                </Select>
                <ComboArrow><Triangle /></ComboArrow>
                <OptionList role="listbox" aria-label="Функция">
                  {options.map((o, i) => (
                    <Option key={o} role="option" aria-selected={i === activeOption} $active={i === activeOption}>
                      {o}
                      {i === activeOption && (
                        <Cursor width="13" height="20" viewBox="0 0 13 20" aria-hidden="true">
                          <path d="M1 1v14l3.500-3 2.500 6 2.500-1L7 11.500h5z" fill="#fff" stroke="#222" />
                        </Cursor>
                      )}
                    </Option>
                  ))}
                </OptionList>
              </Combo>
            </OptionRow>
            <Actions><DialogButton type="button" aria-label="Отмена" /></Actions>
          </FrontBody>
        </Dialog>

        <Taskbar>
          <TaskbarWallpaper />
          <TaskList>
            <Task type="button" aria-label="Пуск" $narrow><StartOrb /></Task>
            <Task type="button" aria-label="Internet Explorer"><BrowserIcon /></Task>
            <Task type="button" aria-label="Skype" $open><SkypeIcon /></Task>
            <Task type="button" aria-label="Проводник"><ExplorerIcon /></Task>
            <Task type="button" aria-label="Яндекс"><YandexIcon /></Task>
            <Task type="button" aria-label="Chrome" $open><ChromeIcon /></Task>
            <Task type="button" aria-label="Редактор триггеров" $open $narrow $stacked />
          </TaskList>
          <Tray>
            <Language>RU</Language>
            <TrayIcons />
            <Clock><span>16:11</span><span>08.10.2013</span></Clock>
            <ShowDesktop type="button" aria-label="Показать рабочий стол" />
          </Tray>
        </Taskbar>
      </Screen>
    </>
  );
}
